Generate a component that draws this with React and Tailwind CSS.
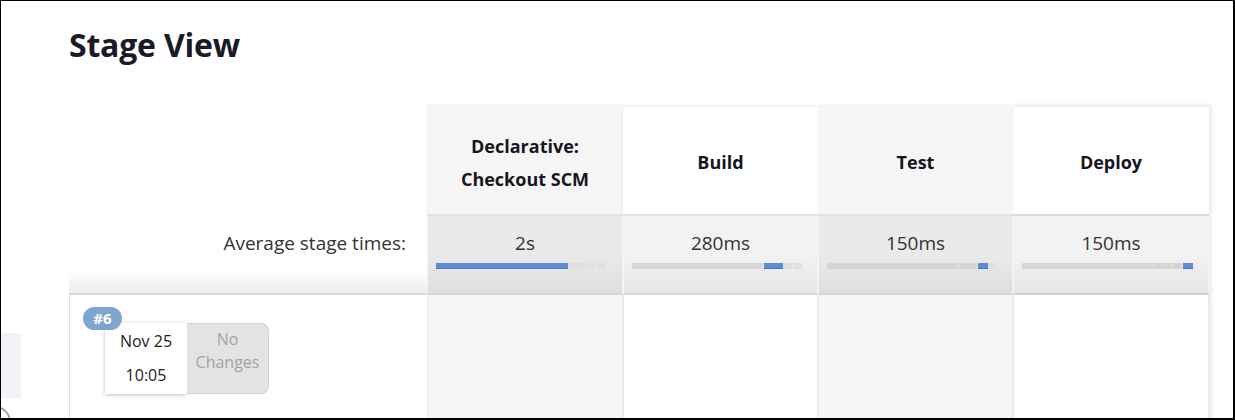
import React from "react";

const stages = [
  { name: ["Declarative:", "Checkout SCM"], avg: "2s", shade: true, w: "w-[196px]" },
  { name: ["Build"], avg: "280ms", shade: false, w: "w-[195px]" },
  { name: ["Test"], avg: "150ms", shade: true, w: "w-[195px]" },
  { name: ["Deploy"], avg: "150ms", shade: false, w: "w-[196px]" },
];

// proportional widths of each stage on the timing bar (171px total)
const segs = [132, 19, 10, 10];

const TimeBar = ({ active }) => (
  <div className="flex h-[6px] w-[171px] ml-[8px]">
    {segs.map((w, i) => (
      <div
        key={i}
        style={{ width: w }}
        className={
          i === active
            ? "h-full bg-[#5b8cd8] border-b border-[#4a78c0]"
            : i < active
            ? "h-full bg-[#d5d5d5] border-r border-[#e6e6e6]"
            : "h-full bg-[#e0e0e0] border-r border-[#ebebeb]"
        }
      />
    ))}
  </div>
);

const App = () => {
  return (
    <div className="w-[1235px] h-[420px] overflow-hidden bg-white border-l border-t border-r-2 border-b-2 border-black flex font-['Open_Sans',sans-serif]">
      {/* left strip (sidebar remnant) */}
      <aside className="w-[20px] shrink-0 flex flex-col">
        <div className="mt-[332px] h-[65px] w-[20px] shrink-0 bg-[#f2f2f6]" />
        <div className="mt-[8px] -ml-[22px] w-[32px] h-[32px] shrink-0 rounded-full border-2 border-[#a0a0a0]" />
      </aside>

      <main className="pl-[48px] flex flex-col">
        <h1 className="mt-[21px] h-[46px] text-[32px] leading-[46px] font-bold tracking-[-0.2px] text-[#1a1a28]">
          Stage View
        </h1>

        <div className="mt-[39px] flex flex-col">
          {/* header row */}
          <div className="flex h-[109px]">
            <div className="w-[358px]" />
            {stages.map((s, i) => (
              <div
                key={i}
                className={`${s.w} flex flex-col items-center justify-center pt-[4px] border-b-2 border-[#e2e2e2] shadow-[0_-2px_3px_rgba(0,0,0,0.06)] ${
                  s.shade ? "bg-[#f6f6f6]" : "bg-white"
                } ${i === 3 ? "shadow-[2px_-2px_4px_rgba(0,0,0,0.1)]" : ""}`}
              >
                {s.name.map((l) => (
                  <div key={l} className="text-[18px] leading-[33px] font-bold text-[#16161e]">
                    {l}
                  </div>
                ))}
              </div>
            ))}
          </div>

          {/* average row */}
          <div className="flex h-[79px]">
            <div className="w-[358px] flex items-start justify-end pr-[21px] pt-[14px] bg-gradient-to-b from-white from-70% to-[#ededed] border-b-2 border-[#d8d8d8]">
              <span className="text-[19px] leading-[26px] text-[#333]">Average stage times:</span>
            </div>
            {stages.map((s, i) => (
              <div
                key={i}
                className={`${s.w} flex flex-col border-x border-[#f4f4f4] border-b-2 border-b-[#d8d8d8] pt-[14px] ${
                  s.shade
                    ? "bg-gradient-to-b from-[#eaeaea] from-50% to-[#dedede]"
                    : "bg-gradient-to-b from-[#f2f2f2] from-50% to-[#e5e5e5]"
                } ${i === 3 ? "shadow-[2px_0_4px_rgba(0,0,0,0.1)]" : ""}`}
              >
                <div className="text-center text-[19px] leading-[26px] text-[#333]">{s.avg}</div>
                <div className="mt-[7px]">
                  <TimeBar active={i} />
                </div>
              </div>
            ))}
          </div>

          {/* build row */}
          <div className="flex h-[140px]">
            <div className="w-[358px] border-l border-[#dedede] pl-[35px] pt-[28px]">
              <div className="relative flex w-[164px] h-[71px]">
                <span className="absolute -left-[22px] -top-[16px] z-10 h-[23px] w-[39px] rounded-full bg-[#7fa6cf] text-white text-[15px] leading-[23px] font-bold text-center">
                  #6
                </span>
                <div className="w-[82px] h-full bg-white shadow-[0_1px_4px_rgba(0,0,0,0.25)] flex flex-col items-center pt-[5px] text-[16px] text-[#222]">
                  <span className="leading-[26px]">Nov 25</span>
                  <span className="mt-[8px] leading-[26px]">10:05</span>
                </div>
                <div className="w-[82px] h-full bg-[#e3e3e3] border border-l-0 border-[#d2d2d2] rounded-r-[8px] flex flex-col items-center pt-[4px] text-[16px] leading-[23px] text-[#a3a3a3]">
                  <span>No</span>
                  <span>Changes</span>
                </div>
              </div>
            </div>
            {stages.map((s, i) => (
              <div
                key={i}
                className={`${s.w} border-x border-[#ebebeb] ${s.shade ? "bg-[#f6f6f6]" : "bg-white"} ${
                  i === 3 ? "shadow-[2px_0_4px_rgba(0,0,0,0.1)]" : ""
                }`}
              />
            ))}
          </div>
        </div>
      </main>
    </div>
  );
};

export default App;
